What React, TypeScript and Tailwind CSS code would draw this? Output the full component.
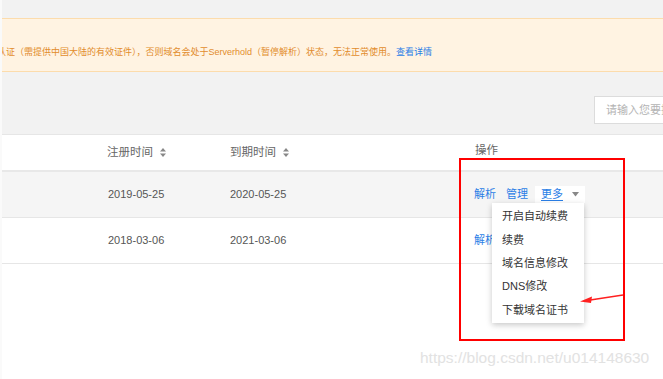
import React from "react";

const font = { fontFamily: '"Liberation Sans", "Noto Sans CJK SC", sans-serif' };

const SortIcon = () => (
  <svg width="6" height="9" viewBox="0 0 6 9" className="ml-[7px] inline-block" aria-hidden="true">
    <path d="M3 0L6 3.5H0Z" fill="#888" />
    <path d="M3 9L6 5.5H0Z" fill="#888" />
  </svg>
);

const rows = [
  { reg: "2019-05-25", exp: "2020-05-25", hover: true },
  { reg: "2018-03-06", exp: "2021-03-06", hover: false },
];

const menuItems = ["开启自动续费", "续费", "域名信息修改", "DNS修改", "下载域名证书"];

export default function App() {
  return (
    <div className="relative w-[663px] h-[379px] overflow-hidden bg-white" style={font}>
      <div className="flex h-full">
        <div className="w-[2px] shrink-0 bg-[#fafafa]" />
        <div className="flex-1 flex flex-col min-w-0">
          {/* top gray area with notice */}
          <div className="bg-[#f2f2f2] pt-[18px]">
            <div className="h-[54px] bg-[#fff3e2] border-y border-[#fcdcac] flex items-end pb-[13px] overflow-hidden whitespace-nowrap">
              <span className="ml-[-5px] text-[9px] leading-[12px] text-[#e28c2c]">
                认证（需提供中国大陆的有效证件），否则域名会处于Serverhold（暂停解析）状态，无法正常使用。
                <span className="text-[#2a7ee6]">查看详情</span>
              </span>
            </div>
            <div className="h-[62px] flex justify-end items-start pt-[24px]">
              <div className="w-[110px] mr-[-41px] h-[28px] bg-white border border-[#dcdcdc] flex items-center pl-[11px] text-[11px] text-[#b4b4b4] whitespace-nowrap overflow-hidden">
                请输入您要搜索的域名
              </div>
            </div>
          </div>

          {/* table */}
          <div className="border-t border-[#e6e6e6]">
            <div className="grid grid-cols-[105px_123px_245px_1fr] h-[37px] items-center border-b-2 border-[#e8e8e8] text-[11.5px] text-[#666]">
              <div />
              <div className="flex items-center">
                注册时间
                <SortIcon />
              </div>
              <div className="flex items-center">
                到期时间
                <SortIcon />
              </div>
              <div className="pb-[4px]">操作</div>
            </div>
            {rows.map((r, i) => (
              <div
                key={r.reg}
                className={`grid grid-cols-[106px_122px_245px_1fr] h-[46px] items-center border-b border-[#e6e6e6] text-[11px] text-[#555] ${r.hover ? "bg-[#f5f5f5]" : "bg-white"}`}
              >
                <div />
                <div>{r.reg}</div>
                <div>{r.exp}</div>
                <div className="flex items-center text-[11px] text-[#2a7ee6] -ml-[1px]">
                  <span>解析</span>
                  {i === 0 && (
                    <>
                      <span className="ml-[10px]">管理</span>
                      <span className="ml-[7px] h-[17px] mt-[-1px] bg-white flex items-center pl-[6px] pr-[6px]">
                        <span className="underline underline-offset-2">更多</span>
                        <svg width="7" height="5" viewBox="0 0 7 5" className="ml-[9px]" aria-hidden="true">
                          <path d="M0 0H7L3.5 4.5Z" fill="#888" />
                        </svg>
                      </span>
                    </>
                  )}
                </div>
              </div>
            ))}
          </div>
        </div>
      </div>

      {/* dropdown menu */}
      <div className="absolute left-[492px] top-[203px] w-[92px] bg-white shadow-[0_2px_6px_rgba(0,0,0,0.22)] py-[2px] text-[11px] text-[#333]">
        {menuItems.map((m) => (
          <div key={m} className="h-[23.3px] flex items-center pl-[10px] whitespace-nowrap">
            {m}
          </div>
        ))}
      </div>

      {/* annotation: red box and arrow */}
      <div className="absolute left-[459px] top-[158px] w-[166px] h-[183px] border-2 border-[#ff0000]" />
      <svg className="absolute left-[575px] top-[288px]" width="52" height="20" viewBox="0 0 52 20" aria-hidden="true">
        <path d="M48 7L12 12.5" stroke="#ff2020" strokeWidth="1.5" fill="none" />
        <path d="M5 13.5L17 8.5L16 15Z" fill="#ff2020" />
      </svg>

      {/* watermark */}
      <div className="absolute left-[420px] top-[348px] text-[15.5px] leading-[20px] text-[#e2e2e2] whitespace-nowrap">
        https://blog.csdn.net/u014148630
      </div>
    </div>
  );
}
